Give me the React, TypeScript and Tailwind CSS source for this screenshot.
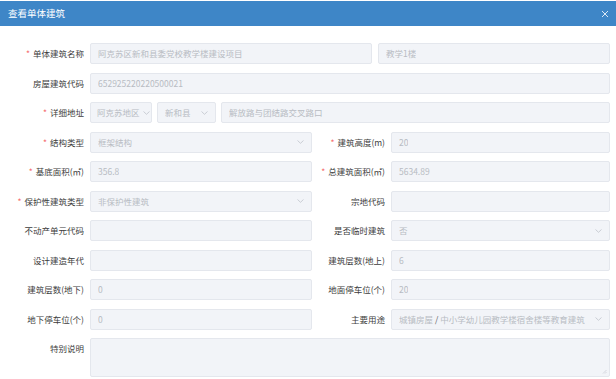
import React from "react"

const font = { fontFamily: '"Microsoft YaHei", "Noto Sans CJK SC", "Noto Sans", sans-serif' }

function Chevron() {
  return (
    <svg width="7" height="4" viewBox="0 0 7 4" className="shrink-0">
      <path d="M0.5 0.5 L3.5 3.3 L6.5 0.5" fill="none" stroke="#c0c4cc" strokeWidth="0.8" />
    </svg>
  )
}

function Label({ text, required, w }: { text: string; required?: boolean; w: string }) {
  return (
    <div className={`${w} shrink-0 flex items-center justify-end pr-[6px] text-[8.5px] text-[#3c3c3c]`}>
      {required && <span className="text-[#f56c6c] mr-[3px]">*</span>}
      {text}
    </div>
  )
}

function Field({ value, select, className = "" }: { value?: string; select?: boolean; className?: string }) {
  return (
    <div
      className={`h-[21px] flex items-center justify-between pl-[7px] rounded-[2px] border border-[#e4e7ed] bg-[#f2f4f8] text-[8.5px] text-[#b8bcc3] ${className}`}
    >
      <span className="truncate">{value}</span>
      {select && <Chevron />}
    </div>
  )
}

function Row({ children }: { children: React.ReactNode }) {
  return <div className="flex items-center h-[21px]">{children}</div>
}

function Pair({
  l,
  lv,
  lsel,
  lreq,
  r,
  rv,
  rsel,
  rreq,
}: {
  l: string
  lv?: string
  lsel?: boolean
  lreq?: boolean
  r: string
  rv?: string
  rsel?: boolean
  rreq?: boolean
}) {
  return (
    <Row>
      <Label text={l} required={lreq} w="w-[90px]" />
      <Field value={lv} select={lsel} className="w-[222px] pr-[7px]" />
      <Label text={r} required={rreq} w="w-[79px]" />
      <Field value={rv} select={rsel} className="w-[219px] pr-[7px]" />
    </Row>
  )
}

export default function App() {
  return (
    <div className="w-[616px] h-[379px] bg-white overflow-hidden" style={font}>
      <div className="h-[25px] mt-[1px] bg-[#3e86c7] flex items-center justify-between px-[8px]">
        <span className="text-white text-[9.5px]">查看单体建筑</span>
        <svg width="8" height="8" viewBox="0 0 8 8" className="mr-[-1px]">
          <path d="M1 1 L7 7 M7 1 L1 7" stroke="#dbe8f5" strokeWidth="1" />
        </svg>
      </div>
      <div className="pt-[17px] flex flex-col gap-[8.5px]">
        <Row>
          <Label text="单体建筑名称" required w="w-[90px]" />
          <Field value="阿克苏区新和县委党校教学楼建设项目" className="w-[282px] pr-[7px]" />
          <Field value="教学1楼" className="w-[232px] ml-[6px] pr-[7px]" />
        </Row>
        <Row>
          <Label text="房屋建筑代码" w="w-[90px]" />
          <Field value="652925220220500021" className="w-[520px] pr-[7px]" />
        </Row>
        <Row>
          <Label text="详细地址" required w="w-[90px]" />
          <div className="w-[62px] h-[21px] flex items-center pl-[6px] rounded-[2px] border border-[#e4e7ed] bg-[#f2f4f8] text-[8.5px] text-[#b8bcc3] whitespace-nowrap">
            <span>阿克苏地区</span>
            <span className="ml-[3px] flex">
              <Chevron />
            </span>
          </div>
          <Field value="新和县" select className="w-[59px] ml-[5px] pr-[7px]" />
          <Field value="解放路与团结路交叉路口" className="w-[389px] ml-[5px] pr-[7px]" />
        </Row>
        <Pair l="结构类型" lreq lv="框架结构" lsel r="建筑高度(m)" rreq rv="20" />
        <Pair l="基底面积(㎡)" lreq lv="356.8" r="总建筑面积(㎡)" rreq rv="5634.89" />
        <Pair l="保护性建筑类型" lreq lv="非保护性建筑" lsel r="宗地代码" />
        <Pair l="不动产单元代码" r="是否临时建筑" rv="否" rsel />
        <Pair l="设计建造年代" r="建筑层数(地上)" rv="6" />
        <Pair l="建筑层数(地下)" lv="0" r="地面停车位(个)" rv="20" />
        <Row>
          <Label text="地下停车位(个)" w="w-[90px]" />
          <Field value="0" className="w-[222px] pr-[7px]" />
          <Label text="主要用途" w="w-[79px]" />
          <div className="w-[219px] h-[21px] flex items-center justify-between px-[7px] rounded-[2px] border border-[#e4e7ed] bg-[#f2f4f8] text-[8.5px] text-[#b8bcc3]">
            <span className="truncate">
              城镇房屋 <span className="text-[#606266]">/</span> 中小学幼儿园教学楼宿舍楼等教育建筑
            </span>
            <Chevron />
          </div>
        </Row>
        <div className="flex items-start">
          <div className="w-[90px] shrink-0 flex justify-end pr-[6px] pt-[4px] text-[8.5px] text-[#3c3c3c]">特别说明</div>
          <div className="w-[520px] h-[39px] rounded-[2px] border border-[#e4e7ed] bg-[#f2f4f8] relative">
            <svg width="5" height="5" viewBox="0 0 5 5" className="absolute right-[2px] bottom-[2px]">
              <path d="M4.5 1 L1 4.5 M4.5 3 L3 4.5" stroke="#c0c4cc" strokeWidth="0.6" />
            </svg>
          </div>
        </div>
      </div>
    </div>
  )
}
